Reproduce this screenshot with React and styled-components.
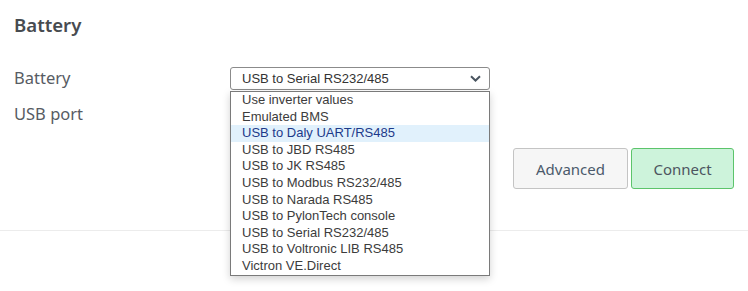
import React from "react";
import styled, { createGlobalStyle } from "styled-components";

const Global = createGlobalStyle`
  html, body { margin: 0; padding: 0; background: #fff; }
  body { font-family: "Noto Sans", "Open Sans", sans-serif; }
`;

const Page = styled.div`
  width: 748px;
  height: 291px;
  overflow: hidden;
  display: flex;
  flex-direction: column;
`;

const Section = styled.section`
  padding: 12px 14px 0 14px;
  display: flex;
  flex-direction: column;
  height: 231px;
  box-sizing: border-box;
  border-bottom: 1px solid #ececec;
`;

const Heading = styled.h2`
  margin: 0;
  font-size: 18.6px;
  font-weight: 600;
  line-height: 26px;
  color: #474b50;
`;

const Form = styled.div`
  margin-top: 29px;
  display: grid;
  grid-template-columns: 216px 260px;
  grid-auto-rows: 36px;
  align-items: start;
`;

const Label = styled.div`
  font-size: 16.5px;
  line-height: 24px;
  color: #575c63;
  margin-top: -1px;
`;

const SelectWrap = styled.div`
  position: relative;
`;

const SelectBox = styled.div`
  height: 23px;
  box-sizing: border-box;
  border: 1px solid #8b8b8b;
  border-radius: 3px;
  background: #fff;
  display: flex;
  align-items: center;
  padding: 0 8px 0 11px;
  font-family: "Liberation Sans", Arial, sans-serif;
  font-size: 13px;
  color: #333;
  justify-content: space-between;
`;

const DropList = styled.ul`
  position: absolute;
  left: 0;
  top: 24px;
  width: 260px;
  box-sizing: border-box;
  margin: 0;
  padding: 0;
  list-style: none;
  background: #fff;
  border: 1px solid #7a7a7a;
  box-shadow: 0 3px 8px rgba(0, 0, 0, 0.18);
  z-index: 5;
`;

const Option = styled.li`
  height: 16.6px;
  line-height: 16.6px;
  padding-left: 11px;
  font-family: "Liberation Sans", Arial, sans-serif;
  font-size: 13px;
  color: ${(p) => (p.$active ? "#1d3a8a" : "#3c3c3c")};
  background: ${(p) => (p.$active ? "#e1f1fc" : "transparent")};
  white-space: nowrap;
`;

const Actions = styled.div`
  margin-top: auto;
  margin-bottom: 41px;
  display: flex;
  justify-content: flex-end;
  gap: 3px;
`;

const Button = styled.button`
  height: 41px;
  width: ${(p) => p.$w}px;
  box-sizing: border-box;
  border-radius: 3px;
  border: 1px solid ${(p) => (p.$primary ? "#5cc46b" : "#c4c4c4")};
  background: ${(p) => (p.$primary ? "#cdf3db" : "#f6f6f6")};
  color: ${(p) => (p.$primary ? "#4c5560" : "#4b5a6b")};
  font-family: "Noto Sans", "Open Sans", sans-serif;
  font-size: 15px;
  padding: 0;
  cursor: pointer;
`;

const options = [
  "Use inverter values",
  "Emulated BMS",
  "USB to Daly UART/RS485",
  "USB to JBD RS485",
  "USB to JK RS485",
  "USB to Modbus RS232/485",
  "USB to Narada RS485",
  "USB to PylonTech console",
  "USB to Serial RS232/485",
  "USB to Voltronic LIB RS485",
  "Victron VE.Direct",
];

export default function App() {
  return (
    <Page>
      <Global />
      <Section>
        <Heading>Battery</Heading>
        <Form>
          <Label>Battery</Label>
          <SelectWrap>
            <SelectBox>
              <span>USB to Serial RS232/485</span>
              <svg width="11" height="7" viewBox="0 0 11 7">
                <path d="M1 1.2 L5.5 5.5 L10 1.2" fill="none" stroke="#4a5560" strokeWidth="2" />
              </svg>
            </SelectBox>
            <DropList>
              {options.map((o, i) => (
                <Option key={o} $active={i === 2}>
                  {o}
                </Option>
              ))}
            </DropList>
          </SelectWrap>
          <Label>USB port</Label>
          <div />
        </Form>
        <Actions>
          <Button $w={115}>Advanced</Button>
          <Button $w={103} $primary>
            Connect
          </Button>
        </Actions>
      </Section>
    </Page>
  );
}
